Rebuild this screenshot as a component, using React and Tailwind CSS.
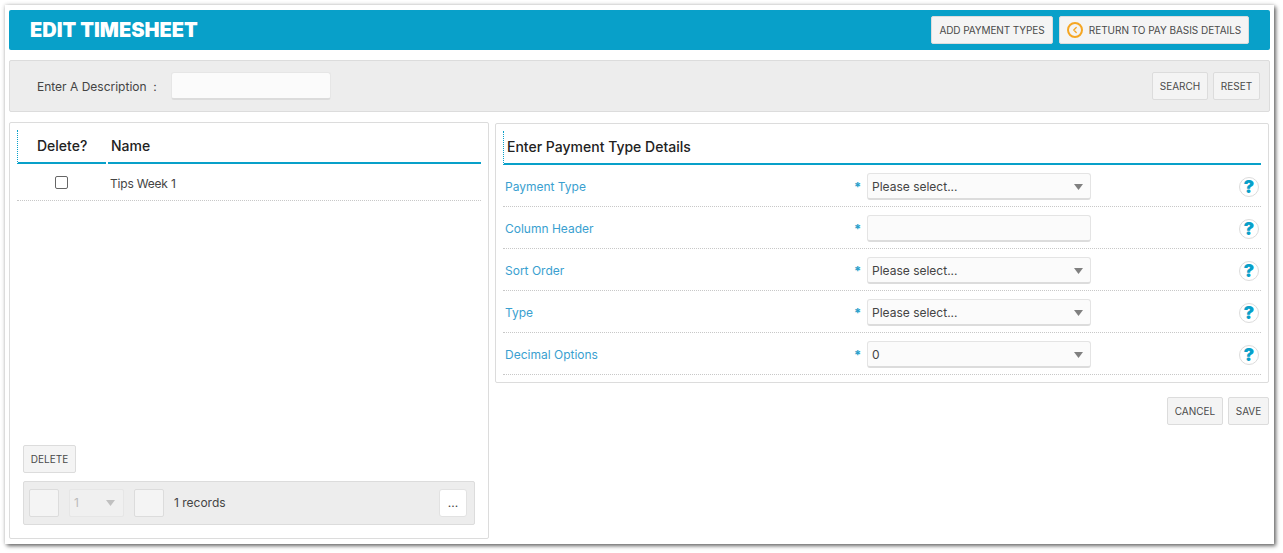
import { ChevronLeft } from 'lucide-react';

const fields = [
  { label: 'Payment Type', value: 'Please select...' },
  { label: 'Column Header', input: true },
  { label: 'Sort Order', value: 'Please select...' },
  { label: 'Type', value: 'Please select...' },
  { label: 'Decimal Options', value: '0' },
];

function Btn({ className = '', children }) {
  return (
    <button className={`h-[28px] flex items-center justify-center bg-[#f4f4f4] border border-[#dcdcdc] rounded-[2px] text-[10px] text-[#4a4a4a] ${className}`}>
      {children}
    </button>
  );
}

function Caret({ color = '#808080' }) {
  return (
    <svg width="9" height="6" viewBox="0 0 9 6">
      <path d="M0 0H9L4.5 6Z" fill={color} />
    </svg>
  );
}

function Field({ label, value, input }) {
  return (
    <div className="h-[42px] pt-[2px] flex items-center border-b border-dotted border-[#c8c8c8]">
      <span className="w-[351px] pl-[2px] text-[12px] text-[#3a9fd0]">{label}</span>
      <span className="mt-px w-[13px] text-[13px] text-[#2a9fcb] font-bold leading-none">*</span>
      <div className="w-[224px] h-[27px] flex items-center justify-between pl-[4px] pr-[7px] pt-px bg-[#fbfbfb] border border-[#e4e4e4] border-b-2 border-b-[#dcdcdc] rounded-[3px] text-[12px] text-[#444]">
        <span>{input ? '' : value}</span>
        {!input && <Caret />}
      </div>
      <div className="mt-px ml-auto mr-[2px] w-[20px] h-[20px] rounded-full border border-[#dcdcdc] bg-white flex items-center justify-center text-[18px] font-black leading-none text-[#08a0c9]">?</div>
    </div>
  );
}

export default function App() {
  return (
    <div className="w-[1283px] h-[553px] bg-white font-['Inter',sans-serif] pt-[5px] pl-[5px]">
      <div className="w-[1269px] h-[539px] bg-white pt-[5px] px-[4px] shadow-[2px_2px_4px_rgba(0,0,0,0.55),0_0_4px_rgba(0,0,0,0.2)]">
        <div className="h-[40px] bg-[#08a0c9] rounded-[2px] flex items-center pl-[21px] pr-[21px] justify-between">
          <h1 className="text-[20px] font-black text-white">EDIT TIMESHEET</h1>
          <div className="flex gap-[6px]">
            <Btn className="w-[122px] tracking-[-0.1px]">ADD PAYMENT TYPES</Btn>
            <Btn className="w-[190px] gap-[6px] tracking-[-0.04px]">
              <span className="w-[16px] h-[16px] rounded-full border-2 border-[#f5a623] flex items-center justify-center">
                <ChevronLeft size={10} strokeWidth={3} color="#f5a623" />
              </span>
              RETURN TO PAY BASIS DETAILS
            </Btn>
          </div>
        </div>

        <div className="mt-[10px] h-[52px] bg-[#ededed] border border-[#dcdcdc] rounded-[2px] flex items-center pl-[27px] pr-[9px]">
          <span className="w-[134px] pt-[2px] text-[12px] text-[#444] whitespace-pre">Enter A Description  :</span>
          <div className="w-[160px] h-[28px] bg-[#fbfbfb] border border-[#e6e6e6] border-b-2 border-b-[#dcdcdc] rounded-[3px]" />
          <div className="ml-auto flex gap-[5px]">
            <Btn className="w-[56px]">SEARCH</Btn>
            <Btn className="w-[47px]">RESET</Btn>
          </div>
        </div>

        <div className="mt-[10px] flex items-start gap-[6px]">
          <div className="w-[480px] h-[417px] border border-[#dcdcdc] rounded-[2px] px-[7px] pt-[7px] flex flex-col">
            <div className="h-[34px] flex border-l border-l-[#08a0c9] [border-left-style:dotted]">
              <div className="w-[88px] pb-[2px] border-b-2 border-[#08a0c9] flex items-center pl-[19px] text-[14px] font-medium text-[#222]">Delete?</div>
              <div className="ml-[2px] flex-1 pb-[2px] border-b-2 border-[#08a0c9] flex items-center pl-[3px] text-[14px] font-medium text-[#222]">Name</div>
            </div>
            <div className="h-[37px] flex items-center border-b border-dotted border-[#c8c8c8]">
              <div className="w-[88px] flex justify-center pl-[1px]">
                <span className="w-[13px] h-[13px] rounded-[2px] border border-[#666] bg-white" />
              </div>
              <span className="pl-[5px] pt-[3px] text-[12px] tracking-[-0.2px] text-[#444]">Tips Week 1</span>
            </div>
            <div className="mt-auto pl-[6px] pr-[6px] pb-[13px]">
              <Btn className="w-[53px]">DELETE</Btn>
              <div className="mt-[8px] h-[44px] bg-[#ededed] border border-[#dcdcdc] rounded-[2px] flex items-center pl-[5px] pr-[7px]">
                <div className="w-[30px] h-[28px] bg-[#f4f4f4] border border-[#dcdcdc] rounded-[2px]" />
                <div className="ml-[10px] w-[55px] h-[28px] bg-[#f0f0f0] border border-[#e6e6e6] rounded-[2px] flex items-center justify-between px-[4px] text-[12px] text-[#bbb]">
                  <span>1</span>
                  <span className="mr-[4px]"><Caret color="#c0c0c0" /></span>
                </div>
                <div className="ml-[10px] w-[30px] h-[28px] bg-[#f4f4f4] border border-[#dcdcdc] rounded-[2px]" />
                <span className="ml-[10px] text-[12px] text-[#444]">1 records</span>
                <div className="ml-auto w-[28px] h-[28px] bg-white border border-[#e2e2e2] rounded-[3px] flex items-center justify-center text-[12px] text-[#444]">...</div>
              </div>
            </div>
          </div>

          <div className="flex-1 min-w-0 pt-px mr-px">
            <div className="h-[260px] border border-[#dcdcdc] rounded-[2px] px-[7px] pt-[7px]">
              <div className="h-[34px] pb-[2px] flex items-center pl-[3px] border-b-2 border-b-[#08a0c9] border-l border-l-[#08a0c9] [border-left-style:dotted] text-[14px] font-medium text-[#222]">
                Enter Payment Type Details
              </div>
              {fields.map((f) => (
                <Field key={f.label} {...f} />
              ))}
            </div>
            <div className="mt-[14px] flex justify-end gap-[5px]">
              <Btn className="w-[56px]">CANCEL</Btn>
              <Btn className="w-[41px]">SAVE</Btn>
            </div>
          </div>
        </div>
      </div>
    </div>
  );
}
